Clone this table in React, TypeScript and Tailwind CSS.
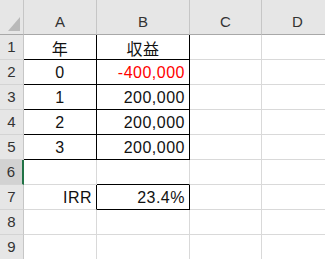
const COLS = ["A", "B", "C", "D"];

type Cell = { text?: string; align?: "left" | "center" | "right"; red?: boolean; cjk?: boolean };

const ROWS: Cell[][] = [
  [{ text: "年", align: "center", cjk: true }, { text: "収益", align: "center", cjk: true }],
  [{ text: "0", align: "center" }, { text: "-400,000", align: "right", red: true }],
  [{ text: "1", align: "center" }, { text: "200,000", align: "right" }],
  [{ text: "2", align: "center" }, { text: "200,000", align: "right" }],
  [{ text: "3", align: "center" }, { text: "200,000", align: "right" }],
  [],
  [{ text: "IRR", align: "right" }, { text: "23.4%", align: "right" }],
  [],
  [],
];

// which cells get black borders: [row][col] -> right/bottom
function blackRight(r: number, c: number) {
  if (r < 5 && c <= 1) return true;
  if (r === 6 && c <= 1) return true;
  return false;
}
function blackBottom(r: number, c: number) {
  if (r < 5 && c <= 1) return true;
  if (r === 5 && c === 1) return true;
  if (r === 6 && c === 1) return true;
  return false;
}

export default function App() {
  return (
    <div className="w-[325px] h-[259px] overflow-hidden bg-white font-['Liberation_Sans',sans-serif]">
      <div className="grid grid-cols-[24px_73px_93px_72px_72px] grid-rows-[35px_repeat(9,25px)] w-[334px]">
        {/* corner */}
        <div className="relative bg-[#e6e6e6] border-r border-b border-r-[#c6c6c6] border-b-[#a8a8a8]">
          <svg className="absolute right-[3px] bottom-[3px]" width="12" height="14" viewBox="0 0 12 14">
            <polygon points="12,0 12,14 0,14" fill="#b9b9b9" />
          </svg>
        </div>
        {COLS.map((c) => (
          <div
            key={c}
            className="flex items-center justify-center pt-[11px] bg-[#e6e6e6] border-r border-b border-r-[#c6c6c6] border-b-[#a8a8a8] text-[15px] text-[#333]"
          >
            {c}
          </div>
        ))}
        {ROWS.map((row, r) => (
          <Row key={r} r={r} row={row} />
        ))}
      </div>
    </div>
  );
}

function Row({ r, row }: { r: number; row: Cell[] }) {
  const selected = r === 5;
  return (
    <>
      <div
        className={
          "flex items-center justify-center pt-[1px] text-[15px] text-[#333] border-b border-b-[#d4d4d4] " +
          (selected
            ? "bg-[#d2d2d2] border-r-2 border-r-[#217346]"
            : "bg-[#e6e6e6] border-r border-r-[#c6c6c6]")
        }
      >
        {r + 1}
      </div>
      {COLS.map((_, c) => {
        const cell = row[c] ?? {};
        const br = blackRight(r, c);
        const bb = blackBottom(r, c);
        return (
          <div
            key={c}
            className={
              "flex items-center px-[4px] pt-[1px] text-[16px] tracking-[0.5px] border-r border-b " +
              (br ? "border-r-black " : "border-r-[#d9d9d9] ") +
              (bb ? "border-b-black " : "border-b-[#d9d9d9] ") +
              (cell.align === "center"
                ? "justify-center "
                : cell.align === "right"
                ? "justify-end "
                : "justify-start ") +
              (cell.red ? "text-[#ff0000] " : "text-[#111] ") +
              (cell.cjk ? "font-['Noto_Sans_CJK_JP',sans-serif] text-[15px] " : "")
            }
          >
            {cell.text}
          </div>
        );
      })}
    </>
  );
}
